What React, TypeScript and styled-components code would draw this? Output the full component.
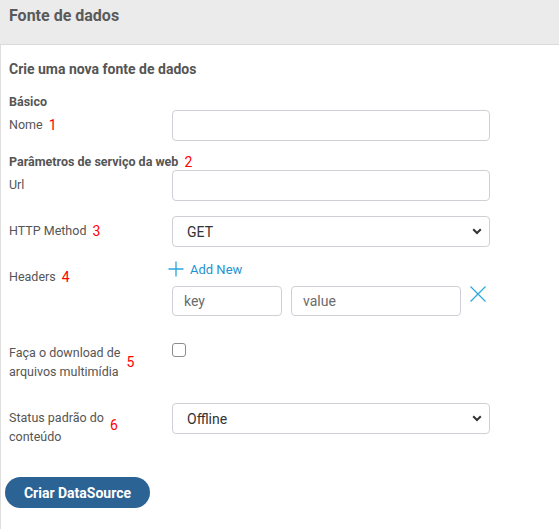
import React from "react";
import styled, { createGlobalStyle } from "styled-components";

const GlobalStyle = createGlobalStyle`
  html, body {
    margin: 0;
    padding: 0;
    background: #fff;
  }
  body {
    font-family: Roboto, "Liberation Sans", Arial, sans-serif;
    color: #555;
  }
  * {
    box-sizing: border-box;
  }
`;

const App = () => (
  <>
    <GlobalStyle />
    <Page>
      <Header>
        <Title>Fonte de dados</Title>
      </Header>
      <Body>
        <Subtitle>Crie uma nova fonte de dados</Subtitle>

        <SectionTitle $top={15}>Básico</SectionTitle>
        <Row>
          <Label $pad={5}>
            <LabelText>Nome</LabelText>
            <Num>1</Num>
          </Label>
          <TextInput />
        </Row>

        <SectionTitle $top={13}>
          Parâmetros de serviço da web<Num>2</Num>
        </SectionTitle>
        <Row>
          <Label $pad={5}>
            <LabelText>Url</LabelText>
          </Label>
          <TextInput />
        </Row>

        <Row $top={15}>
          <Label $pad={5}>
            <LabelText>HTTP Method</LabelText>
            <Num>3</Num>
          </Label>
          <Select value="GET" options={["GET", "POST", "PUT", "DELETE"]} />
        </Row>

        <Row $top={14}>
          <Label $pad={6}>
            <LabelText>Headers</LabelText>
            <Num>4</Num>
          </Label>
          <HeadersBox>
            <AddNew>
              <svg width="16" height="16" viewBox="0 0 16 16">
                <path d="M8 0.5V15.5M0.5 8H15.5" stroke="#2aa6dd" strokeWidth="1.3" fill="none" />
              </svg>
              Add New
            </AddNew>
            <PairRow>
              <SmallInput $w={110} placeholder="key" />
              <SmallInput $w={170} placeholder="value" />
              <RemoveButton aria-label="remove">
                <svg width="16" height="16" viewBox="0 0 16 16">
                  <path d="M0.5 0.5L15.5 15.5M15.5 0.5L0.5 15.5" stroke="#2aa6dd" strokeWidth="1.2" fill="none" />
                </svg>
              </RemoveButton>
            </PairRow>
          </HeadersBox>
        </Row>

        <Row $top={27}>
          <Label $pad={0}>
            <LabelText>
              Faça o download de
              <br />
              arquivos multimídia
            </LabelText>
            <Num>5</Num>
          </Label>
          <Checkbox type="checkbox" />
        </Row>

        <Row $top={22}>
          <Label $pad={5}>
            <LabelText>
              Status padrão do
              <br />
              conteúdo
            </LabelText>
            <Num $down={-2}>6</Num>
          </Label>
          <Select value="Offline" options={["Offline", "Online"]} />
        </Row>

        <SubmitButton>Criar DataSource</SubmitButton>
      </Body>
    </Page>
  </>
);

export default App;

const Select = ({ value, options }: { value: string; options: string[] }) => (
  <SelectWrap>
    <SelectField defaultValue={value}>
      {options.map((o) => (
        <option key={o}>{o}</option>
      ))}
    </SelectField>
    <Chevron width="10" height="7" viewBox="0 0 10 7">
      <path d="M1.2 1.2L5 5L8.8 1.2" stroke="#333" strokeWidth="2" fill="none" />
    </Chevron>
  </SelectWrap>
);

const Page = styled.div`
  width: 559px;
  min-height: 529px;
`;

const Header = styled.div`
  height: 45px;
  background: #ebebeb;
  border-bottom: 1px solid #dadada;
  padding: 6px 9px 0;
`;

const Title = styled.h1`
  margin: 0;
  font-size: 16px;
  line-height: 20px;
  font-weight: 700;
  color: #5a5a5a;
`;

const Body = styled.div`
  border-left: 1px solid #dedede;
  padding: 14px 0 21px 8px;
  min-height: 484px;
`;

const Subtitle = styled.h2`
  margin: 0;
  font-size: 14px;
  line-height: 20px;
  font-weight: 700;
  color: #555;
`;

const SectionTitle = styled.h3<{ $top: number }>`
  margin: ${({ $top }) => $top}px 0 0;
  font-size: 12.5px;
  line-height: 16px;
  font-weight: 700;
  color: #555;
  display: flex;
  align-items: center;
`;

const Row = styled.div<{ $top?: number }>`
  display: flex;
  align-items: flex-start;
  margin-top: ${({ $top }) => $top ?? 0}px;
`;

const Label = styled.div<{ $pad: number }>`
  width: 163px;
  flex: none;
  padding-top: ${({ $pad }) => $pad}px;
  display: flex;
  align-items: center;
`;

const LabelText = styled.span`
  font-size: 12.5px;
  line-height: 19px;
  color: #555;
`;

const Num = styled.span<{ $down?: number }>`
  color: #ff0000;
  font-size: 14px;
  line-height: 16px;
  margin-left: 6px;
  position: relative;
  top: ${({ $down }) => $down ?? 0}px;
  font-weight: 400;
`;

const TextInput = styled.input`
  width: 318px;
  height: 31px;
  border: 1px solid #cdd1d6;
  border-radius: 4px;
  padding: 0 14px;
  font-family: inherit;
  font-size: 14px;
  color: #333;
  outline: none;
`;

const SelectWrap = styled.div`
  position: relative;
  width: 318px;
  height: 31px;
`;

const SelectField = styled.select`
  appearance: none;
  width: 100%;
  height: 100%;
  border: 1px solid #cdd1d6;
  border-radius: 4px;
  padding: 0 14px;
  background: #fff;
  font-family: inherit;
  font-size: 14px;
  color: #333;
  outline: none;
`;

const Chevron = styled.svg`
  position: absolute;
  right: 8px;
  top: 12px;
  pointer-events: none;
`;

const HeadersBox = styled.div`
  display: flex;
  flex-direction: column;
  gap: 9px;
`;

const AddNew = styled.div`
  display: flex;
  align-items: center;
  gap: 6px;
  margin-left: -4px;
  height: 16px;
  font-size: 13px;
  color: #1f93cf;
  cursor: pointer;
`;

const PairRow = styled.div`
  display: flex;
  align-items: flex-start;
  gap: 9px;
`;

const SmallInput = styled.input<{ $w: number }>`
  width: ${({ $w }) => $w}px;
  height: 30px;
  border: 1px solid #cdd1d6;
  border-radius: 4px;
  padding: 0 11px;
  font-family: inherit;
  font-size: 14px;
  color: #333;
  outline: none;

  &::placeholder {
    color: #6b6b6b;
  }
`;

const RemoveButton = styled.button`
  border: 0;
  background: none;
  padding: 0;
  width: 16px;
  height: 16px;
  display: flex;
  cursor: pointer;
`;

const Checkbox = styled.input`
  appearance: none;
  margin: 0;
  width: 14px;
  height: 14px;
  border: 1px solid #8d8d8d;
  border-radius: 3px;
  background: #fff;
`;

const SubmitButton = styled.button`
  margin: 31px 0 0 -4px;
  width: 145px;
  height: 31px;
  border: 0;
  border-radius: 16px;
  background: #2c6395;
  color: #fff;
  font-family: inherit;
  font-size: 14px;
  font-weight: 700;
  cursor: pointer;
`;
